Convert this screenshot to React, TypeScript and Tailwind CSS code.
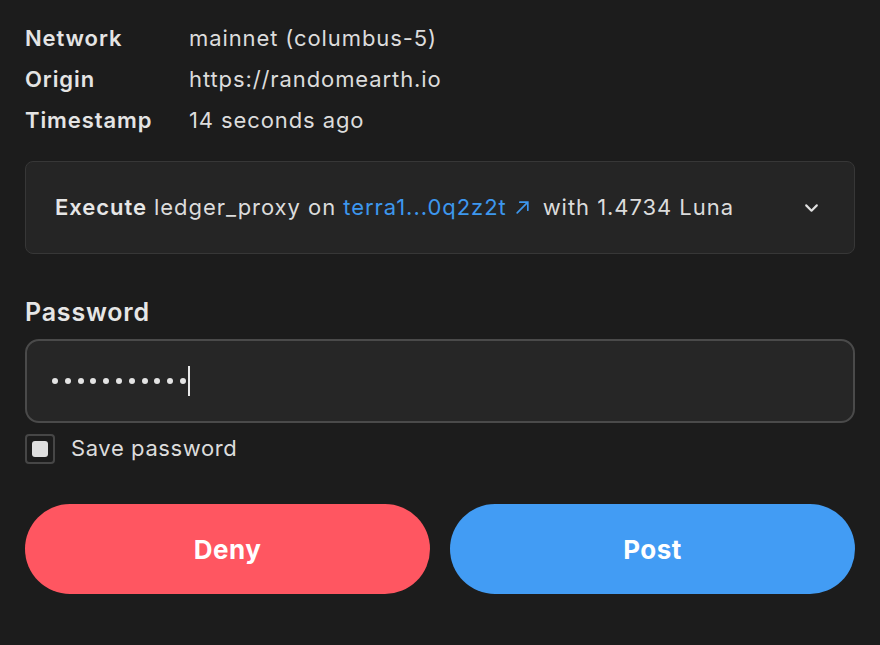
import React from "react";

const font = { fontFamily: "Inter, 'Noto Sans', sans-serif" };

export default function App() {
  return (
    <div
      className="w-[880px] h-[645px] bg-[#1c1c1c] text-[#e4e4e4] px-[25px] pt-[22px] flex flex-col"
      style={font}
    >
      <div className="grid grid-cols-[164px_1fr] gap-y-[9px] text-[22px] leading-[32px] tracking-[0.9px]">
        <div className="font-semibold">Network</div>
        <div className="font-normal text-[#dcdcdc]">mainnet (columbus-5)</div>
        <div className="font-semibold">Origin</div>
        <div className="font-normal text-[#dcdcdc]">https://randomearth.io</div>
        <div className="font-semibold">Timestamp</div>
        <div className="font-normal text-[#dcdcdc]">14 seconds ago</div>
      </div>

      <div className="mt-[25px] h-[93px] rounded-[8px] border border-[#373737] bg-[#252525] flex items-center pl-[29px] pr-[34px]">
        <div className="flex-1 text-[22px] tracking-[0.95px] text-[#dcdcdc] flex items-center">
          <span className="font-semibold text-[#e6e6e6]">Execute</span>
          <span>&nbsp;ledger_proxy on&nbsp;</span>
          <span className="text-[#3d97ee]">terra1...0q2z2t</span>
          <svg width="17" height="17" viewBox="0 0 16 16" className="ml-[7px] mr-[12px]" fill="none" stroke="#3d97ee" strokeWidth="1.6" strokeLinecap="round">
            <path d="M3 13 L13 3 M5.5 3 H13 V10.5" />
          </svg>
          <span>with 1.4734 Luna</span>
        </div>
        <svg width="17" height="17" viewBox="0 0 16 16" fill="none" stroke="#e0e0e0" strokeWidth="2" strokeLinecap="round" strokeLinejoin="round">
          <path d="M3 6 L8 11 L13 6" />
        </svg>
      </div>

      <div className="mt-[42px] text-[25px] font-semibold leading-[32px] tracking-[0.8px] text-[#e6e6e6]">Password</div>

      <div className="mt-[11px] h-[84px] rounded-[14px] border-2 border-[#4a4a4a] bg-[#262626] flex items-center pl-[25px]">
        <div className="flex items-center gap-[6.8px]">
          {Array.from({ length: 11 }).map((_, i) => (
            <div key={i} className="w-[6px] h-[6px] rounded-full bg-[#e4e4e4]" />
          ))}
        </div>
        <span className="ml-[2px] w-[2px] h-[30px] bg-[#e8e8e8]" />
      </div>

      <div className="mt-[9px] flex items-center gap-[16px]">
        <div className="w-[30px] h-[30px] rounded-[4px] border-2 border-[#464646] flex items-center justify-center">
          <div className="w-[16px] h-[16px] rounded-[3px] bg-[#dedede]" />
        </div>
        <span className="text-[22px] tracking-[0.6px] text-[#dcdcdc]">Save password</span>
      </div>

      <div className="mt-[39px] grid grid-cols-2 gap-[20px]">
        <button className="h-[90px] rounded-full bg-[#ff5661] text-white text-[26px] tracking-[0.5px] font-bold">Deny</button>
        <button className="h-[90px] rounded-full bg-[#429cf4] text-white text-[26px] tracking-[0.5px] font-bold">Post</button>
      </div>
    </div>
  );
}
